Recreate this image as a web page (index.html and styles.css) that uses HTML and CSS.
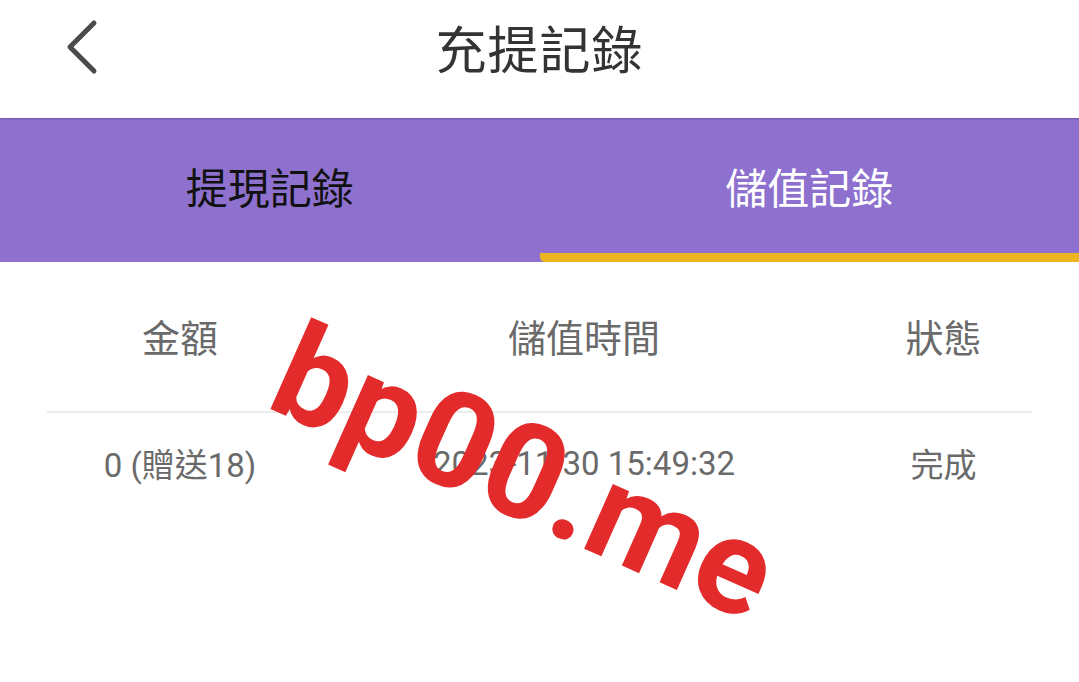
FILE: index.html
```html
<!DOCTYPE html>
<html lang="zh-Hant">
<head>
    <meta charset="UTF-8">
    <meta name="viewport" content="width=device-width, initial-scale=1.0">
    <title>充提記錄</title>
    <link rel="stylesheet" href="styles.css">
</head>
<body>
    <div class="page">
        <div class="topbar">
            <a class="back" href="#">
                <svg width="40" height="56" viewBox="0 0 40 56">
                    <path d="M32 4 L8 28 L32 52" fill="none" stroke="#4a4a4a" stroke-width="5" stroke-linecap="round" stroke-linejoin="round"/>
                </svg>
            </a>
            <div class="title">充提記錄</div>
        </div>

        <div class="tabs">
            <div class="tab">提現記錄</div>
            <div class="tab active">儲值記錄</div>
        </div>

        <div class="records">
            <div class="row head">
                <div>金額</div>
                <div>儲值時間</div>
                <div>狀態</div>
            </div>
            <div class="row">
                <div>0 (贈送18)</div>
                <div>2023-11-30 15:49:32</div>
                <div>完成</div>
            </div>
        </div>

        <div class="watermark">bp00.me</div>
    </div>
</body>
</html>
```

FILE: styles.css
```css
* {
    box-sizing: border-box;
}
body {
    margin: 0;
    padding: 0;
    background-color: #fff;
    font-family: Roboto, "Noto Sans CJK TC", sans-serif;
}
.page {
    position: relative;
    width: 1079px;
    height: 682px;
    overflow: hidden;
}
.topbar {
    position: relative;
    height: 118px;
    display: flex;
    justify-content: center;
    align-items: center;
    padding-bottom: 24px;
    box-shadow: 0 1px 2px rgba(0, 0, 0, 0.25);
    z-index: 1;
}
.back {
    position: absolute;
    left: 62px;
    top: 19px;
    display: block;
}
.title {
    font-size: 51px;
    color: #333;
    letter-spacing: 1px;
}
.tabs {
    display: flex;
    height: 144px;
    background-color: #8e71cf;
}
.tab {
    flex: 1;
    display: flex;
    justify-content: center;
    align-items: center;
    padding-bottom: 10px;
    font-size: 42px;
    color: #111;
}
.tab.active {
    color: #fff;
    border-bottom: 9px solid #ebb521;
    border-radius: 0 0 0 5px;
    padding-bottom: 1px;
}
.records {
    padding: 0 47px;
}
.row {
    display: grid;
    grid-template-columns: 266px 542px 1fr;
    text-align: center;
    color: #6a6a6a;
    font-size: 33px;
    height: 100px;
    align-items: center;
}
.row.head {
    height: 151px;
    font-size: 38px;
    padding-bottom: 3px;
    border-bottom: 2px solid #ececec;
}
.watermark {
    position: absolute;
    left: 282px;
    top: 298px;
    font-family: Roboto, sans-serif;
    font-weight: bold;
    font-size: 134px;
    line-height: 1;
    color: #e32b2b;
    transform: rotate(24deg);
    transform-origin: left center;
    white-space: nowrap;
}
```
